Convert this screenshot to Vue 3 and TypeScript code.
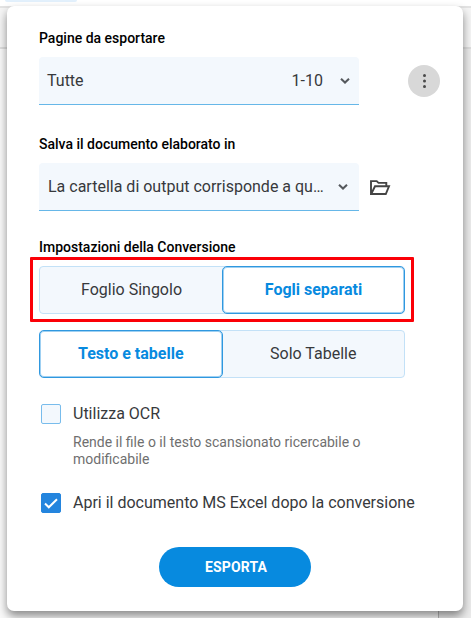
<script setup lang="ts">
import { ref } from 'vue'

interface Option {
  id: string
  label: string
}

const sheetOptions: Option[] = [
  { id: 'single', label: 'Foglio Singolo' },
  { id: 'separate', label: 'Fogli separati' },
]
const contentOptions: Option[] = [
  { id: 'all', label: 'Testo e tabelle' },
  { id: 'tables', label: 'Solo Tabelle' },
]

const sheetMode = ref('separate')
const contentMode = ref('all')
const useOcr = ref(false)
const openAfter = ref(true)
</script>

<template>
  <div class="page">
    <div class="backdrop">
      <div class="tabs"><span class="tab"></span></div>
      <div class="toolbar"></div>
      <div class="workspace"><div class="canvas"></div></div>
    </div>

    <section class="dialog">
      <h2 class="label">Pagine da esportare</h2>
      <div class="row">
        <button class="select pages" type="button">
          <span class="value">Tutte</span>
          <span class="range">1-10</span>
          <svg class="chevron" width="10" height="8" viewBox="0 0 10 8"><path d="M1 1.7 5 5.5 9 1.7" /></svg>
        </button>
        <button class="more" type="button" aria-label="Altro">
          <svg width="4" height="16" viewBox="0 0 4 16">
            <circle cx="2.5" cy="2.5" r="1.5" /><circle cx="2.5" cy="8" r="1.5" /><circle cx="2.5" cy="13.5" r="1.5" />
          </svg>
        </button>
      </div>

      <h2 class="label save">Salva il documento elaborato in</h2>
      <div class="row">
        <button class="select folder" type="button">
          <span class="value">La cartella di output corrisponde a qu…</span>
          <svg class="chevron" width="10" height="8" viewBox="0 0 10 8"><path d="M1 1.7 5 5.5 9 1.7" /></svg>
        </button>
        <svg class="folder-icon" width="21" height="16" viewBox="0 0 21 16">
          <path d="M1 14V1.1h5.7l1.8 1.8h7.8v3.3M1.2 14 5 6.3h14L15.8 14Z" />
        </svg>
      </div>

      <h2 class="label settings">Impostazioni della Conversione</h2>
      <div class="highlight">
        <div class="segmented">
          <button
            v-for="option in sheetOptions"
            :key="option.id"
            class="segment"
            :class="{ active: sheetMode === option.id }"
            type="button"
            @click="sheetMode = option.id"
          ><span>{{ option.label }}</span></button>
        </div>
      </div>
      <div class="segmented content">
        <button
          v-for="option in contentOptions"
          :key="option.id"
          class="segment"
          :class="{ active: contentMode === option.id }"
          type="button"
          @click="contentMode = option.id"
        ><span>{{ option.label }}</span></button>
      </div>

      <div class="check ocr" @click="useOcr = !useOcr">
        <span class="box" :class="{ checked: useOcr }">
          <svg v-if="useOcr" width="14" height="11" viewBox="0 0 14 11"><path d="M1 5.5 4.8 9.3 13 1.2" /></svg>
        </span>
        <span class="check-label">Utilizza OCR</span>
      </div>
      <p class="hint">Rende il file o il testo scansionato ricercabile o<br />modificabile</p>
      <div class="check open" @click="openAfter = !openAfter">
        <span class="box" :class="{ checked: openAfter }">
          <svg v-if="openAfter" width="14" height="11" viewBox="0 0 14 11"><path d="M1 5.5 4.8 9.3 13 1.2" /></svg>
        </span>
        <span class="check-label">Apri il documento MS Excel dopo la conversione</span>
      </div>

      <button class="export" type="button">ESPORTA</button>
    </section>
  </div>
</template>

<style>
body {
  overflow: hidden;
}
</style>

<style scoped>
* {
  box-sizing: border-box;
}
.page {
  position: relative;
  width: 471px;
  height: 618px;
  overflow: hidden;
  font-family: Roboto, sans-serif;
  font-size: 16px;
  color: #37393c;
}
.backdrop {
  display: flex;
  flex-direction: column;
  height: 618px;
}
.tabs {
  height: 6px;
  padding-left: 5px;
  background: #fff;
}
.tab {
  display: block;
  width: 72px;
  height: 2px;
  background: #e2f0fc;
  border-radius: 0 0 12px 12px;
}
.toolbar {
  height: 43px;
  background: #f5f5f5;
  border-top: 2px solid #e3e3e3;
  border-bottom: 2px solid #dedede;
}
.workspace {
  flex: 1;
  background: #ebebeb;
}
.canvas {
  width: 439px;
  height: 569px;
  background: #fafafa;
  border-right: 1px solid #b8b8b8;
}
.dialog {
  position: absolute;
  left: 7px;
  top: 6px;
  width: 456px;
  height: 605px;
  padding: 22px 0 0 32px;
  display: flex;
  flex-direction: column;
  align-items: flex-start;
  background: #fff;
  border-radius: 7px;
  box-shadow: 0 5px 10px rgba(0, 0, 0, 0.45);
}
button {
  margin: 0;
  padding: 0;
  border: 0;
  font: inherit;
  color: inherit;
}
.label {
  height: 20px;
  margin: 0 0 9px;
  font-size: 14px;
  font-weight: 500;
  line-height: 20px;
  color: #000;
  white-space: nowrap;
}
.label.save {
  margin-top: 29px;
}
.label.settings {
  margin: 26px 0 0;
}
.row {
  display: flex;
  align-items: center;
}
.select {
  display: flex;
  align-items: center;
  width: 320px;
  height: 48px;
  padding: 0 9px 0 8px;
  background: #f3f8fd;
  border-bottom: 1px solid #66b7e8;
  border-radius: 4px 4px 0 0;
  text-align: left;
  white-space: nowrap;
}
.value {
  flex: 1;
}
.range {
  margin-right: 17px;
}
.select.folder {
  padding: 0 11px 0 9px;
}
.chevron {
  fill: none;
  stroke: #55595d;
  stroke-width: 2;
}
.more {
  display: flex;
  align-items: center;
  justify-content: center;
  width: 32px;
  height: 32px;
  margin-left: 49px;
  background: #d8d8d8;
  border-radius: 50%;
}
.more svg {
  fill: #4a4a4a;
}
.folder-icon {
  margin-left: 11px;
  margin-top: 1px;
  fill: none;
  stroke: #444;
  stroke-width: 1.9;
}
.highlight {
  width: 384px;
  height: 65px;
  margin-left: -9px;
  padding: 6px;
  border: 3px solid #fb0007;
  border-radius: 1px;
}
.segmented {
  display: flex;
  width: 366px;
  height: 48px;
  background: #f3f8fd;
  border: 1px solid #c3e1f7;
  border-radius: 4px;
}
.segmented.content {
  margin-top: 8px;
}
.segment {
  width: 182px;
  height: 46px;
  padding-bottom: 2px;
  background: none;
  white-space: nowrap;
}
.segment:first-child:not(.active) {
  padding-left: 1px;
}
.segment.active {
  width: 184px;
  height: 48px;
  margin: -1px 0 -1px -1px;
  background: #fff;
  border: 1px solid #2f98df;
  border-radius: 5px;
  box-shadow: inset 0 0 0 1px #9fd0f2;
  font-weight: 700;
  color: #078adf;
}
.segment.active:last-child {
  width: 183px;
  margin: -1px -1px -1px 0;
}
.check {
  display: flex;
  align-items: center;
  height: 20px;
  margin-left: 2px;
  white-space: nowrap;
}
.check.ocr {
  margin-top: 26px;
}
.check.open {
  margin-top: 25px;
}
.box {
  display: flex;
  align-items: center;
  justify-content: center;
  width: 20px;
  height: 20px;
  margin-right: 12px;
  background: #f3f8fd;
  border: 1px solid #78bcec;
  border-radius: 2px;
}
.box.checked {
  background: #2485de;
  border-color: #2485de;
}
.box svg {
  fill: none;
  stroke: #fff;
  stroke-width: 2;
}
.check-label {
  padding-bottom: 1px;
}
.hint {
  margin: 10px 0 0 34px;
  font-size: 14px;
  line-height: 17px;
  color: #6f6f6f;
  white-space: nowrap;
}
.export {
  width: 152px;
  height: 40px;
  margin: 34px 0 0 120px;
  padding: 0 0 1px 2px;
  background: #078adf;
  border-radius: 20px;
  font-size: 14px;
  font-weight: 700;
  letter-spacing: 0.15px;
  color: #fff;
}
</style>
